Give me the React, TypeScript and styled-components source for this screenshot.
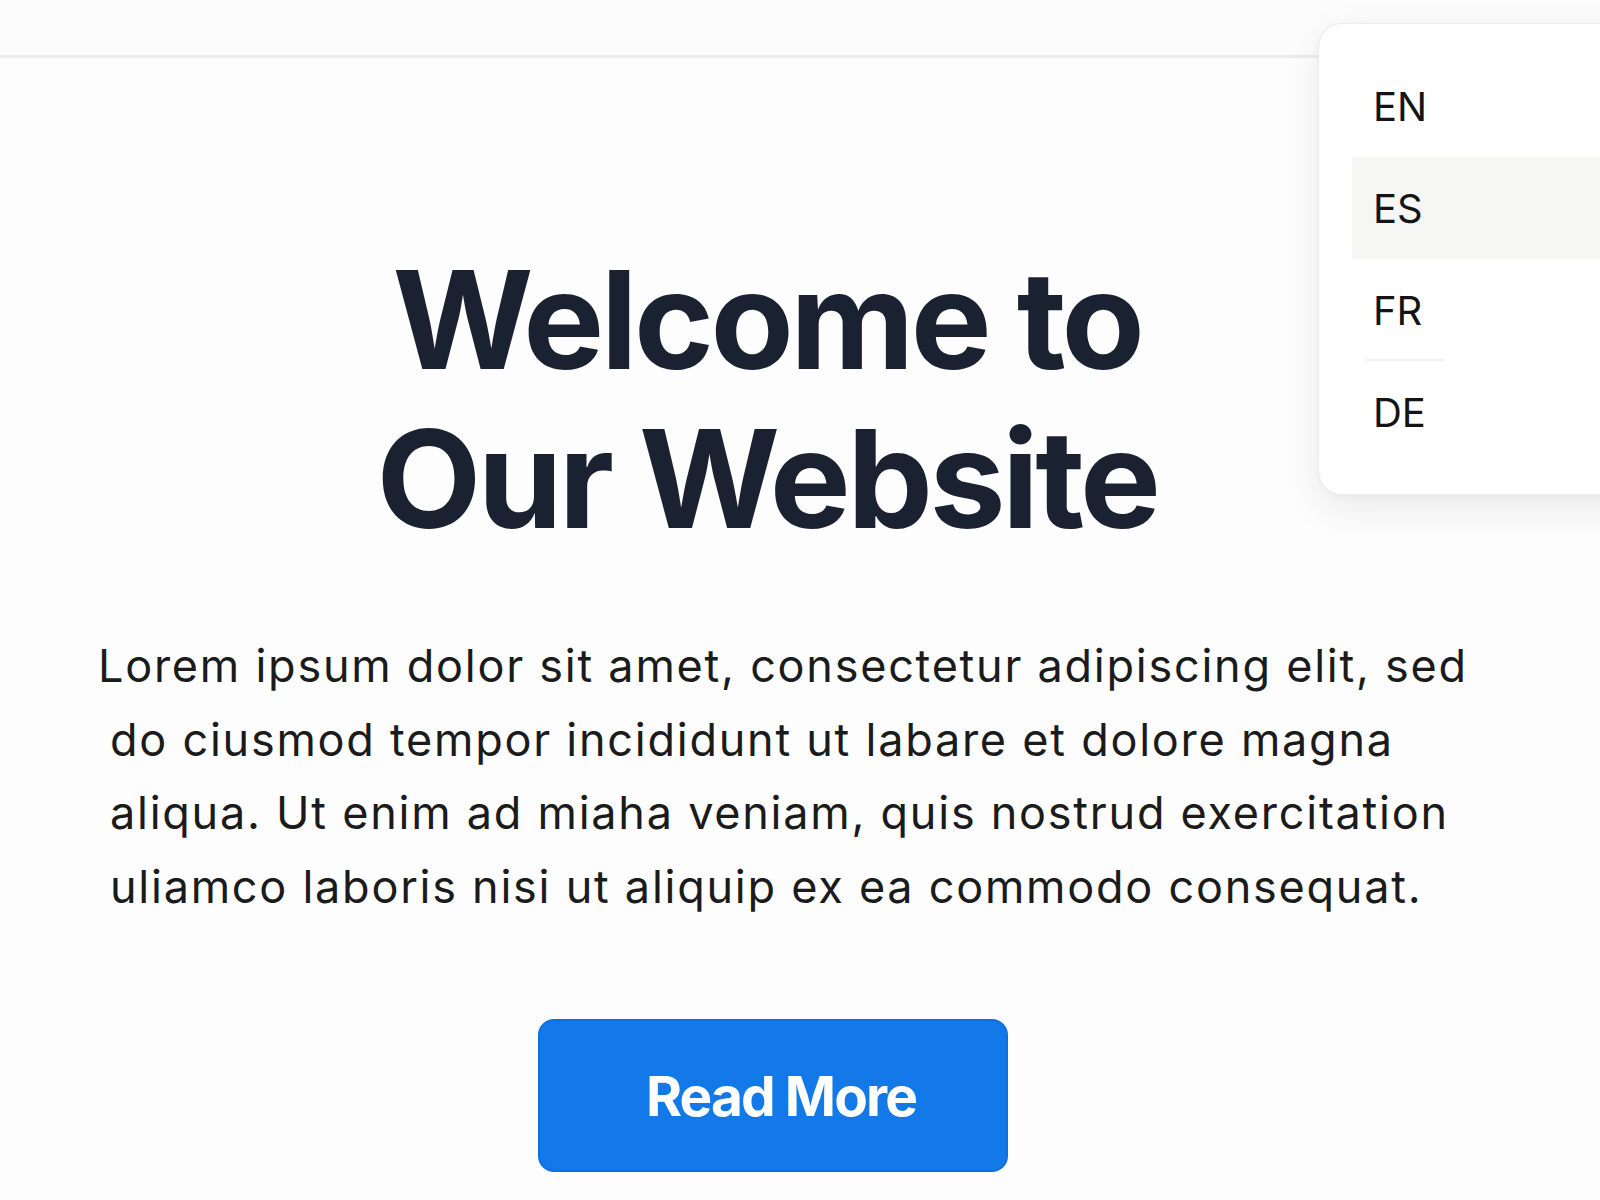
import styled, { createGlobalStyle } from "styled-components";

const GlobalStyle = createGlobalStyle`
  html, body {
    margin: 0;
    padding: 0;
    background: #fdfdfd;
    font-family: Inter, "Noto Sans", "Liberation Sans", sans-serif;
  }
  #root {
    min-height: 1200px;
    overflow: hidden;
    position: relative;
  }
`;

const Page = styled.div`
  position: relative;
  width: 1600px;
  min-height: 1200px;
  overflow: hidden;
`;

const TopBar = styled.header`
  height: 55px;
  background: #fcfcfc;
  border-bottom: 3px solid #ececec;
`;

const LangMenu = styled.ul`
  position: absolute;
  top: 23px;
  left: 1318px;
  width: 330px;
  margin: 0;
  padding: 31px 0 31px 33px;
  list-style: none;
  background: #ffffff;
  border: 1px solid #ebebeb;
  border-radius: 24px;
  box-shadow: 0 14px 40px rgba(0, 0, 0, 0.08), 0 2px 6px rgba(0, 0, 0, 0.03);
`;

const LangItem = styled.li<{ $active?: boolean; $divider?: boolean }>`
  position: relative;
  height: 102px;
  line-height: 103px;
  padding-left: 21px;
  font-size: 40px;
  font-weight: 400;
  color: #141414;
  background: ${(p) => (p.$active ? "#f6f6f5" : "transparent")};

  ${(p) =>
    p.$divider &&
    `
    &::after {
      content: "";
      position: absolute;
      left: 14px;
      bottom: 0;
      width: 78px;
      height: 2px;
      background: #efefef;
    }
  `}
`;

const Hero = styled.main`
  display: flex;
  flex-direction: column;
  align-items: center;
  padding: 182px 54px 0 0;
`;

const Title = styled.h1`
  margin: 0 12px 0 0;
  font-size: 136px;
  line-height: 159px;
  font-weight: 700;
  letter-spacing: -3.6px;
  color: #1a2232;
  text-align: center;
`;

const Lead = styled.p`
  align-self: flex-start;
  margin: 71px 0 0 98px;
  padding-left: 12px;
  text-indent: -12px;
  font-size: 45px;
  line-height: 73.5px;
  font-weight: 400;
  letter-spacing: 1.75px;
  color: #1b1b1b;
  white-space: nowrap;
`;

const ReadMore = styled.button`
  margin-top: 96px;
  width: 470px;
  height: 153px;
  padding: 0 0 0 16px;
  border: 2px solid #0f6fe0;
  border-radius: 16px;
  background: #1479e8;
  color: #ffffff;
  font-family: inherit;
  font-size: 55px;
  font-weight: 700;
  letter-spacing: -1.9px;
  cursor: pointer;
`;

const languages = ["EN", "ES", "FR", "DE"];

export default function App() {
  return (
    <>
      <GlobalStyle />
      <Page>
        <TopBar />
        <LangMenu>
          {languages.map((lang) => (
            <LangItem key={lang} $active={lang === "ES"} $divider={lang === "FR"}>
              {lang}
            </LangItem>
          ))}
        </LangMenu>
        <Hero>
          <Title>
            Welcome to
            <br />
            Our Website
          </Title>
          <Lead>
            Lorem ipsum dolor sit amet, consectetur adipiscing elit, sed
            <br />
            do ciusmod tempor incididunt ut labare et dolore magna
            <br />
            aliqua. Ut enim ad miaha veniam, quis nostrud exercitation
            <br />
            uliamco laboris nisi ut aliquip ex ea commodo consequat.
          </Lead>
          <ReadMore>Read More</ReadMore>
        </Hero>
      </Page>
    </>
  );
}
